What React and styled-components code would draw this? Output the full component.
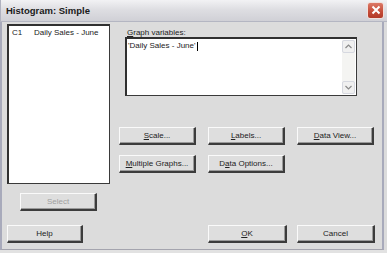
import styled, { createGlobalStyle } from "styled-components"

const Global = createGlobalStyle`
    html, body { margin: 0; padding: 0; background: #e2e2e2; }
    * { box-sizing: border-box; }
`

const Win = styled.div`
    width: 387px;
    height: 250px;
    background: #dcdcdc;
    font-family: "Liberation Sans", Arial, sans-serif;
    font-size: 8px;
    color: #111;
    display: flex;
    flex-direction: column;
    overflow: hidden;
`

const TitleBar = styled.div`
    height: 22px;
    display: flex;
    align-items: center;
    justify-content: space-between;
    padding: 0 3px 0 5px;
    background: linear-gradient(#f2f2f4, #dedee2 45%, #d0d0d6);
    border-bottom: 1px solid #b4b6c2;
    border-left: 1px solid #b0b2c0;
`

const Title = styled.span`
    font-weight: bold;
    font-size: 9.5px;
    color: #1a1a1a;
`

const CloseBtn = styled.div`
    width: 17px;
    height: 17px;
    border: 1px solid #f2e0dc;
    border-radius: 3px;
    background: linear-gradient(#dc7a68, #c44a36 60%, #b23a28);
    display: flex;
    align-items: center;
    justify-content: center;
    margin-top: -1px;
`

const Body = styled.div`
    flex: 1;
    display: flex;
    flex-direction: column;
    padding: 2px 0 0 5px;
    border-left: 2px solid #a8aabb;
    margin-right: 3px;
    border-right: 2px solid #a8aabb;
    border-bottom: 1px solid #a4a4ae;
`

const Top = styled.div`
    display: flex;
`

const LeftCol = styled.div`
    width: 103px;
    display: flex;
    flex-direction: column;
    align-items: center;
    gap: 9px;
`

const ListBox = styled.div`
    width: 103px;
    height: 160px;
    background: #fff;
    border: 1px solid #3a3a3a;
    border-top: 2px solid #303030;
    border-left: 2px solid #303030;
    padding: 2px 2px;
`

const ListRow = styled.div`
    display: flex;
    line-height: 10px;
    color: #222;
    span:first-child { width: 23px; padding-left: 1px; }
`

const RightCol = styled.div`
    margin-left: 9px;
    display: flex;
    flex-direction: column;
`

const Label = styled.div`
    margin: 4px 0 0 8px;
    height: 9px;
    line-height: 9px;
    color: #222;
`

const TextBox = styled.div`
    margin-left: 6px;
    width: 232px;
    height: 59px;
    background: #fff;
    border: 1px solid #3a3a3a;
    border-top: 2px solid #303030;
    border-left: 2px solid #303030;
    display: flex;
    justify-content: space-between;
`

const TextLine = styled.div`
    padding: 2px 0 0 1px;
    line-height: 10px;
    display: flex;
    align-items: center;
    height: 12px;
    color: #222;
`

const Caret = styled.span`
    display: inline-block;
    width: 1px;
    height: 9px;
    background: #000;
    margin-left: 1px;
`

const Scroll = styled.div`
    width: 13px;
    margin: 1px 1px 1px 0;
    display: flex;
    flex-direction: column;
    justify-content: space-between;
    background: #f4f4f2;
`

const Arrow = styled.div`
    height: 13px;
    border: 1px solid #d6d8e0;
    border-radius: 2px;
    background: #f0f0f0;
    display: flex;
    align-items: center;
    justify-content: center;
`

const BtnGrid = styled.div`
    display: grid;
    grid-template-columns: repeat(3, 77px);
    column-gap: 12px;
    row-gap: 10px;
    margin-top: 31px;
`

const Button = styled.div`
    width: ${p => p.$w || 77}px;
    height: 18px;
    background: #dedede;
    border-top: 1px solid #fafafa;
    border-left: 1px solid #fafafa;
    border-right: 2px solid #3c3c3c;
    border-bottom: 2px solid #3c3c3c;
    box-shadow: inset -1px -1px 0 #9a9a9a;
    display: flex;
    align-items: center;
    justify-content: center;
    color: ${p => (p.$disabled ? "#a0a0a0" : "#222")};
    line-height: 1;
    u { text-decoration: underline; text-underline-offset: 1px; }
`

const Bottom = styled.div`
    display: flex;
    margin-top: 14px;
    align-items: center;
`

const Right = styled.div`
    display: flex;
    gap: 10px;
    margin-left: auto;
    margin-right: 7px;
`

const Up = () => (
    <svg width="7" height="5" viewBox="0 0 7 5">
        <path d="M0.5 4 L3.5 1 L6.5 4" fill="none" stroke="#8a8a8a" strokeWidth="1.2" />
    </svg>
)

const Down = () => (
    <svg width="7" height="5" viewBox="0 0 7 5">
        <path d="M0.5 1 L3.5 4 L6.5 1" fill="none" stroke="#8a8a8a" strokeWidth="1.2" />
    </svg>
)

export default function App() {
    return (
        <>
            <Global />
            <Win>
                <TitleBar>
                    <Title>Histogram: Simple</Title>
                    <CloseBtn>
                        <svg width="10" height="10" viewBox="0 0 10 10">
                            <path d="M1.5 1.5 L8.5 8.5 M8.5 1.5 L1.5 8.5" stroke="#fff" strokeWidth="2" />
                        </svg>
                    </CloseBtn>
                </TitleBar>
                <Body>
                    <Top>
                        <LeftCol>
                            <ListBox>
                                <ListRow>
                                    <span>C1</span>
                                    <span>Daily Sales - June</span>
                                </ListRow>
                            </ListBox>
                            <Button $disabled>Select</Button>
                        </LeftCol>
                        <RightCol>
                            <Label><u>G</u>raph variables:</Label>
                            <TextBox>
                                <TextLine>'Daily Sales - June'<Caret /></TextLine>
                                <Scroll>
                                    <Arrow><Up /></Arrow>
                                    <Arrow><Down /></Arrow>
                                </Scroll>
                            </TextBox>
                            <BtnGrid>
                                <Button><u>S</u>cale...</Button>
                                <Button><u>L</u>abels...</Button>
                                <Button><u>D</u>ata View...</Button>
                                <Button><u>M</u>ultiple Graphs...</Button>
                                <Button>D<u>a</u>ta Options...</Button>
                            </BtnGrid>
                        </RightCol>
                    </Top>
                    <Bottom>
                        <Button $w={76}>Help</Button>
                        <Right>
                            <Button $w={79}><u>O</u>K</Button>
                            <Button $w={78}>Cancel</Button>
                        </Right>
                    </Bottom>
                </Body>
            </Win>
        </>
    )
}
